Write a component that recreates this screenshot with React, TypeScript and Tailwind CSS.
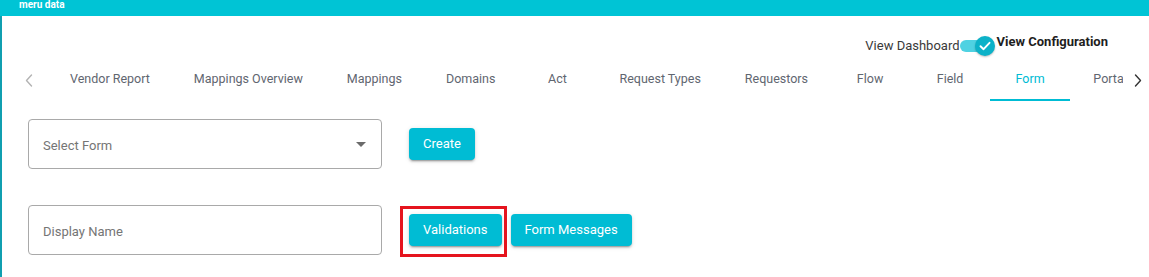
import { useState } from "react";

// ─── Tabs ─────────────────────────────────────────────────────────────────────
const TABS = [
  "Vendor Report",
  "Mappings Overview",
  "Mappings",
  "Domains",
  "Act",
  "Request Types",
  "Requestors",
  "Flow",
  "Field",
  "Form",
  "Portal",
];

const BTN_SHADOW =
  "shadow-[0_3px_1px_-2px_rgba(0,0,0,0.2),0_2px_2px_0_rgba(0,0,0,0.14),0_1px_5px_0_rgba(0,0,0,0.12)]";

function Chevron({ dir, color }: { dir: "left" | "right"; color: string }) {
  return (
    <svg width="8" height="13" viewBox="0 0 8 13" fill="none">
      <polyline
        points={dir === "left" ? "6.5,1 1.5,6.5 6.5,12" : "1.5,1 6.5,6.5 1.5,12"}
        stroke={color}
        strokeWidth="1.4"
        strokeLinecap="round"
        strokeLinejoin="round"
      />
    </svg>
  );
}

// ─── Switch ───────────────────────────────────────────────────────────────────
function ViewSwitch() {
  return (
    <div className="relative w-[34px] h-[20px] flex items-center shrink-0">
      <div className="w-[34px] h-[12px] rounded-full bg-[#4fd2e2]" />
      <div className="absolute right-[-1px] top-0 w-[20px] h-[20px] rounded-full bg-[#0cb2c8] flex items-center justify-center shadow-[0_1px_2px_rgba(0,0,0,0.25)]">
        <svg width="12" height="10" viewBox="0 0 12 10" fill="none">
          <polyline
            points="1.5,5.2 4.6,8.2 10.5,1.8"
            stroke="white"
            strokeWidth="1.9"
            strokeLinecap="round"
            strokeLinejoin="round"
          />
        </svg>
      </div>
    </div>
  );
}

function OutlinedField({ placeholder, select }: { placeholder: string; select?: boolean }) {
  return (
    <div className="w-[354px] h-[50px] shrink-0 rounded-[4px] border border-[#a9a9a9] flex items-center pl-[14px] pr-[15px]">
      <span className="flex-1 pt-[3px] text-[13px] text-[#757575]">{placeholder}</span>
      {select && (
        <svg width="10" height="5" viewBox="0 0 10 5">
          <polygon points="0,0 10,0 5,5" fill="#6b6b6b" />
        </svg>
      )}
    </div>
  );
}

function TealButton({ label }: { label: string }) {
  return (
    <button
      className={`h-[32px] px-[14px] pb-[1px] rounded-[4px] bg-[#00bcd4] text-white text-[13px] leading-none ${BTN_SHADOW}`}
    >
      {label}
    </button>
  );
}

// ─── Page ─────────────────────────────────────────────────────────────────────
export default function App() {
  const [active, setActive] = useState("Form");

  return (
    <div className="w-[1149px] h-[277px] overflow-hidden bg-white font-['Roboto',sans-serif]">
      {/* top bar */}
      <div className="h-[16px] bg-[#00c4d5] pl-[19px]">
        <span className="block text-[10px] leading-[9px] font-bold text-white">meru data</span>
      </div>

      <div className="flex h-[261px]">
        <div className="w-[2px] bg-[#109fb0] shrink-0" />

        <div className="flex-1 min-w-0">
          {/* view toggle */}
          <div className="mt-[19px] h-[22px] flex items-center justify-end pr-[41px]">
            <span className="text-[13px] text-[#3a3a3a]">View Dashboard</span>
            <ViewSwitch />
            <span className="ml-[3px] mb-[9px] text-[13px] font-bold text-[#1e1e1e]">
              View Configuration
            </span>
          </div>

          {/* tabs */}
          <div className="h-[44px] flex">
            <div className="ml-[8px] w-[38px] shrink-0 flex items-center justify-center pt-[2px]">
              <Chevron dir="left" color="#b3b3b3" />
            </div>
            <div className="flex-1 min-w-0 flex overflow-hidden">
              {TABS.map((t) => (
                <button
                  key={t}
                  onClick={() => setActive(t)}
                  className={`shrink-0 min-w-[80px] px-[22px] pt-[3px] h-full flex items-center justify-center text-[12.5px] whitespace-nowrap border-b-2 ${
                    active === t
                      ? "text-[#00bcd4] border-[#00bcd4]"
                      : "text-[#5f6670] border-transparent"
                  }`}
                >
                  {t}
                </button>
              ))}
            </div>
            <div className="w-[26px] shrink-0 flex items-center pl-[11px] pt-[2px]">
              <Chevron dir="right" color="#333333" />
            </div>
          </div>

          {/* form rows */}
          <div className="pl-[26px]">
            <div className="mt-[18px] flex items-center">
              <OutlinedField placeholder="Select Form" select />
              <div className="ml-[27px]">
                <TealButton label="Create" />
              </div>
            </div>

            <div className="mt-[36px] flex items-center">
              <OutlinedField placeholder="Display Name" />
              <div className="ml-[27px] flex items-center gap-[9px]">
                <div className="relative">
                  <TealButton label="Validations" />
                  <div className="absolute left-[-9px] top-[-8px] w-[107px] h-[51px] border-[3px] border-[#e5141e] pointer-events-none" />
                </div>
                <TealButton label="Form Messages" />
              </div>
            </div>
          </div>
        </div>
      </div>
    </div>
  );
}
